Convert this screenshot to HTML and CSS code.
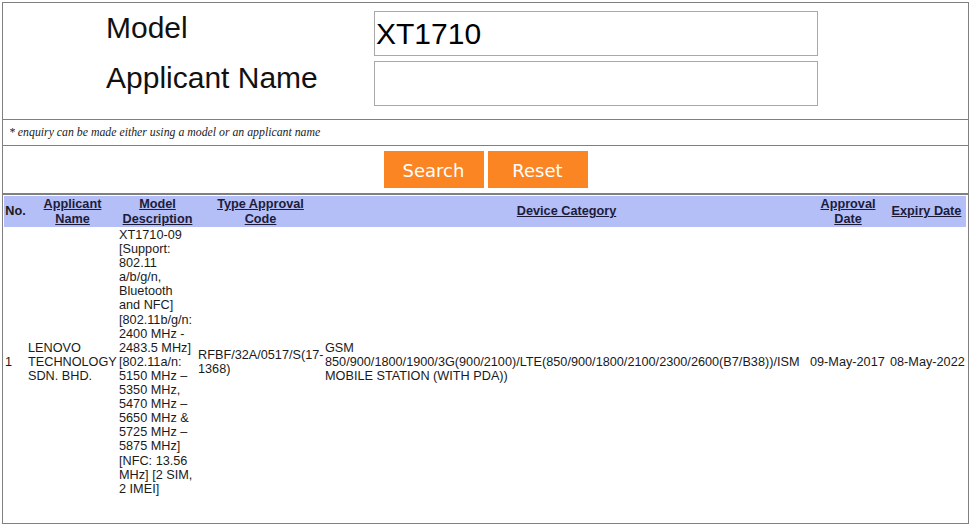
FILE: index.html
```html
<!DOCTYPE html>
<html lang="en">

<head>
  <meta charset="UTF-8">
  <meta name="viewport" content="width=device-width, initial-scale=1.0">
  <title>Type Approval Enquiry</title>
  <link rel="stylesheet" href="styles.css">
</head>

<body>
  <div class="enquiry">
    <form class="search-form">
      <div class="field">
        <label for="model">Model</label>
        <input type="text" id="model" name="model" value="XT1710">
      </div>
      <div class="field">
        <label for="applicant">Applicant Name</label>
        <input type="text" id="applicant" name="applicant">
      </div>
    </form>

    <div class="note">* enquiry can be made either using a model or an applicant name</div>

    <div class="actions">
      <a href="#" class="btn">Search</a>
      <a href="#" class="btn">Reset</a>
    </div>

    <table class="results">
      <thead>
        <tr>
          <th class="col-no">No.</th>
          <th class="col-applicant"><a href="#">Applicant Name</a></th>
          <th class="col-model"><a href="#">Model Description</a></th>
          <th class="col-code"><a href="#">Type Approval Code</a></th>
          <th class="col-category"><a href="#">Device Category</a></th>
          <th class="col-approval"><a href="#">Approval Date</a></th>
          <th class="col-expiry"><a href="#">Expiry Date</a></th>
        </tr>
      </thead>
      <tbody>
        <tr>
          <td>1</td>
          <td>LENOVO TECHNOLOGY SDN. BHD.</td>
          <td>XT1710-09 [Support: 802.11 a/b/g/n, Bluetooth and NFC] [802.11b/g/n: 2400 MHz - 2483.5 MHz] [802.11a/n: 5150 MHz &ndash; 5350 MHz, 5470 MHz &ndash; 5650 MHz &amp; 5725 MHz &ndash; 5875 MHz] [NFC: 13.56 MHz] [2 SIM, 2 IMEI]</td>
          <td>RFBF/32A/0517/S(17-1368)</td>
          <td>GSM 850/900/1800/1900/3G(900/2100)/LTE(850/900/1800/2100/2300/2600(B7/B38))/ISM MOBILE STATION (WITH PDA))</td>
          <td class="date">09-May-2017</td>
          <td class="date expiry">08-May-2022</td>
        </tr>
      </tbody>
    </table>
  </div>
</body>

</html>
```

FILE: styles.css
```css
* {
  box-sizing: border-box;
}

body {
  margin: 0;
  background: #ffffff;
  font-family: "Liberation Sans", Arial, sans-serif;
  color: #111111;
}

.enquiry {
  width: 967px;
  height: 522px;
  margin: 2px;
  border: 1px solid #808080;
}

/* search fields */
.search-form {
  display: flex;
  flex-direction: column;
  gap: 5px;
  padding: 8px 0 13px 103px;
  border-bottom: 1px solid #808080;
}

.field {
  display: flex;
  align-items: flex-start;
  height: 45px;
}

.field label {
  width: 268px;
  font-size: 30px;
  line-height: 34px;
  color: #111111;
}

.field input {
  width: 444px;
  height: 45px;
  margin: 0;
  padding: 0 1px;
  border: 1px solid #a9a9a9;
  font-family: "Liberation Sans", Arial, sans-serif;
  font-size: 30px;
  color: #000000;
  outline: none;
}

.note {
  height: 26px;
  padding-left: 6px;
  border-bottom: 1px solid #808080;
  font-family: "Liberation Serif", "Times New Roman", serif;
  font-style: italic;
  font-size: 11.8px;
  line-height: 25px;
  color: #222222;
}

/* buttons */
.actions {
  display: flex;
  justify-content: center;
  gap: 4px;
  padding: 5px 0;
  border-bottom: 2px solid #808080;
}

.btn {
  display: inline-block;
  width: 100px;
  height: 37px;
  background: #fb8523;
  color: #ffffff;
  font-family: "DejaVu Sans", Verdana, sans-serif;
  font-size: 18px;
  line-height: 39px;
  text-align: center;
  text-decoration: none;
}

/* results table */
.results {
  width: 962px;
  margin: 1px 0 0 1px;
  table-layout: fixed;
  border-collapse: collapse;
  font-size: 12.7px;
  line-height: 14.1px;
  color: #1a1a1a;
}

.results th {
  padding: 1px;
  background: #b4bef7;
  font-weight: bold;
  line-height: 14.5px;
  text-align: center;
  vertical-align: middle;
  color: #1a1a1a;
}

.results th a {
  color: #1c1c3a;
  text-decoration: underline;
}

.results td {
  padding: 1px;
  vertical-align: middle;
  text-align: left;
}

.results td.date {
  white-space: nowrap;
}

.results td.expiry {
  padding-left: 3px;
}

.col-no {
  width: 23px;
}

.col-applicant {
  width: 91px;
}

.col-model {
  width: 79px;
}

.results th.col-code {
  width: 127px;
  padding: 1px 12px;
}

.col-category {
  width: 485px;
}

.col-approval {
  width: 78px;
}

.col-expiry {
  width: 79px;
}
```
